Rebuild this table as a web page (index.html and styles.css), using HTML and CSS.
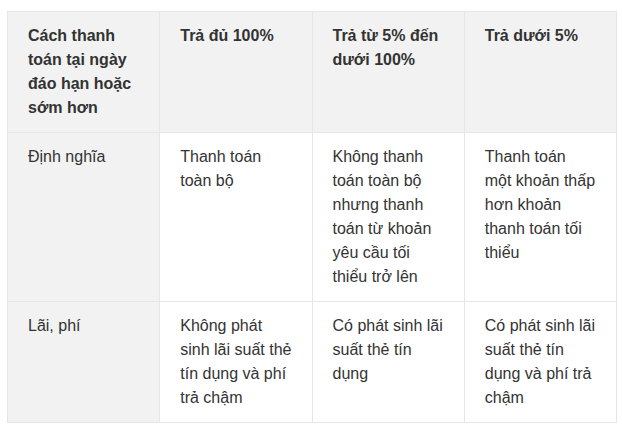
FILE: index.html
```html
<!DOCTYPE html>
<html lang="vi">
<head>
<meta charset="utf-8">
<title>Cách thanh toán</title>
<link rel="stylesheet" href="styles.css">
</head>
<body>
<div class="wrap">
<table class="pay-table">
  <thead>
    <tr>
      <th>Cách thanh toán tại ngày đáo hạn hoặc sớm hơn</th>
      <th>Trả đủ 100%</th>
      <th>Trả từ 5% đến dưới 100%</th>
      <th>Trả dưới 5%</th>
    </tr>
  </thead>
  <tbody>
    <tr>
      <td class="label">Định nghĩa</td>
      <td>Thanh toán toàn bộ</td>
      <td>Không thanh toán toàn bộ nhưng thanh toán từ khoản yêu cầu tối thiểu trở lên</td>
      <td>Thanh toán một khoản thấp hơn khoản thanh toán tối thiểu</td>
    </tr>
    <tr>
      <td class="label">Lãi, phí</td>
      <td>Không phát sinh lãi suất thẻ tín dụng và phí trả chậm</td>
      <td>Có phát sinh lãi suất thẻ tín dụng</td>
      <td>Có phát sinh lãi suất thẻ tín dụng và phí trả chậm</td>
    </tr>
  </tbody>
</table>
</div>
</body>
</html>
```
FILE: styles.css
```css
html, body {
  margin: 0;
  padding: 0;
  background: #ffffff;
}
.wrap {
  padding: 11px 5px 0 7px;
}
.pay-table {
  width: 610px;
  table-layout: fixed;
  border-collapse: collapse;
  font-family: "Liberation Sans", Arial, sans-serif;
  font-size: 16px;
  line-height: 24px;
  color: #333333;
}
.pay-table th,
.pay-table td {
  border: 1px solid #e6e6e6;
  padding: 12px 20px;
  vertical-align: top;
  text-align: left;
}
.pay-table th {
  background: #f2f2f2;
  font-weight: bold;
}
.pay-table td.label {
  background: #f2f2f2;
}
```
